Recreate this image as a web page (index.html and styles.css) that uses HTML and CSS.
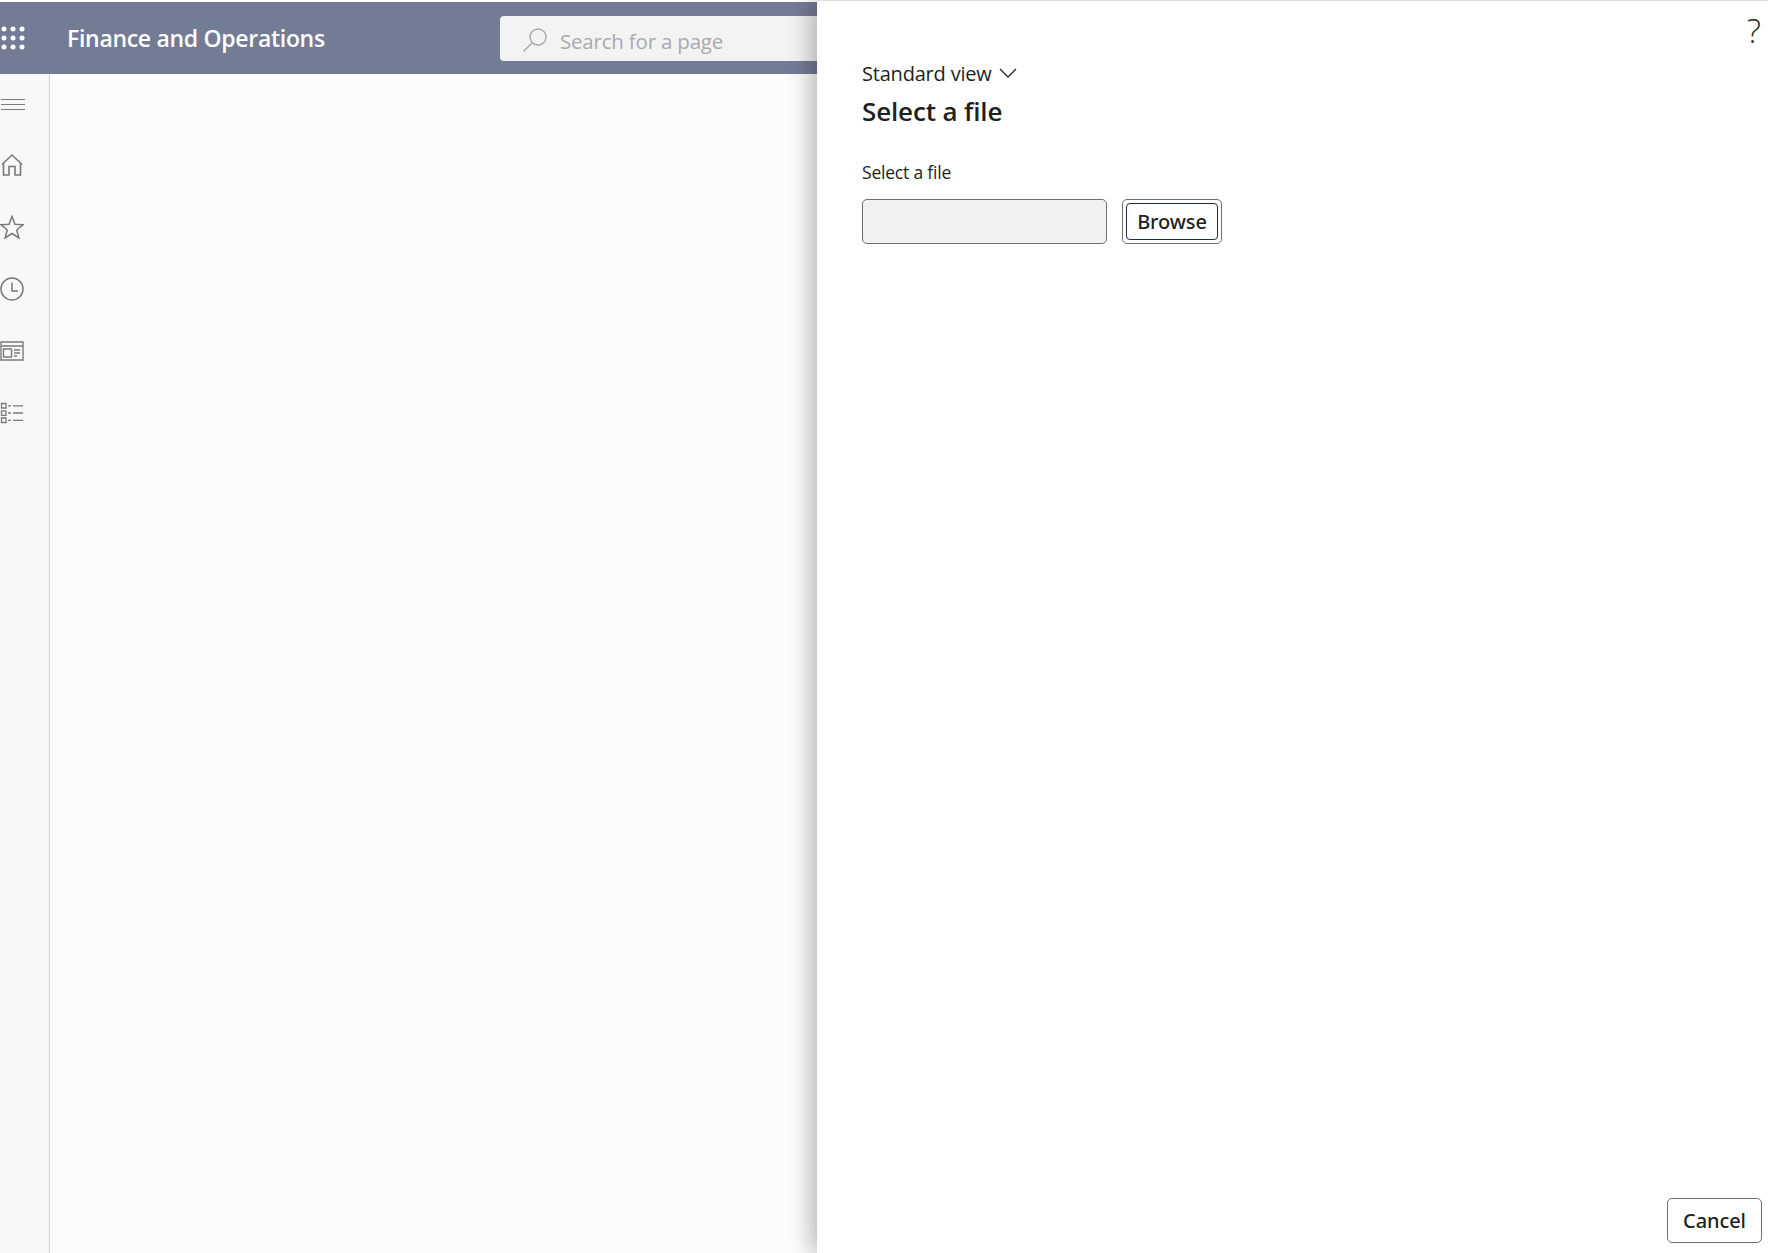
FILE: index.html
```html
<!DOCTYPE html>
<html lang="en">
<head>
<meta charset="utf-8">
<title>Finance and Operations</title>
<link rel="stylesheet" href="styles.css">
</head>
<body>
<div class="shell">
  <header class="topbar">
    <svg class="waffle" width="26" height="26" viewBox="0 0 26 26" fill="#fff"><circle cx="3" cy="4" r="2.5"/><circle cx="12" cy="4" r="2.5"/><circle cx="21" cy="4" r="2.5"/><circle cx="3" cy="13" r="2.5"/><circle cx="12" cy="13" r="2.5"/><circle cx="21" cy="13" r="2.5"/><circle cx="3" cy="22" r="2.5"/><circle cx="12" cy="22" r="2.5"/><circle cx="21" cy="22" r="2.5"/></svg>
    <span class="brand">Finance and Operations</span>
    <div class="search">
      <svg width="26" height="26" viewBox="0 0 26 26" fill="none" stroke="#a8a8a8" stroke-width="1.4"><circle cx="16" cy="10" r="8"/><path d="M10.2 15.8 1.5 24.5"/></svg>
      <span class="search-text">Search for a page</span>
    </div>
  </header>
  <div class="work">
    <nav class="rail">
      <svg class="ico" width="26" height="12" viewBox="0 0 26 12" stroke="#7a7a7a" stroke-width="1" fill="none"><path d="M1 .5h24M1 5.5h24M1 10.5h24"/></svg>
      <svg class="ico" width="24" height="24" viewBox="0 0 24 24" stroke="#7a7a7a" stroke-width="1.6" fill="none"><path d="M2 11.500 12 2l10 9.500M3.500 10v12h5.500v-8.500h6V22h5.500V10"/></svg>
      <svg class="ico" width="24" height="24" viewBox="0 0 24 24" stroke="#7a7a7a" stroke-width="1.5" fill="none"><path d="M12 1.500l3 7.800 8 .5-6.200 5.200 2.100 8L12 18.500 5.100 23l2.100-8L1 9.800l8-.5z"/></svg>
      <svg class="ico" width="24" height="24" viewBox="0 0 24 24" stroke="#7a7a7a" stroke-width="1.500" fill="none"><circle cx="12" cy="12" r="11"/><path d="M12 5.500V14h6"/></svg>
      <svg class="ico" width="24" height="20" viewBox="0 0 24 20" stroke="#7a7a7a" stroke-width="1.400" fill="none"><path d="M1 1h22v18H1zM1 5h22M3.500 8h8v8h-8zM14 9h6M14 12h6M14 15h3"/></svg>
      <svg class="ico" width="24" height="22" viewBox="0 0 24 22" stroke="#7a7a7a" stroke-width="1.300" fill="none"><path d="M1.500 1.500h4.500v4.500H1.500zM1.500 8.800h4.500v4.500H1.500zM1.500 16h4.500v4.500H1.500zM8 3.800h3M13 3.800h10M8 11h3M13 11h10M8 18.300h3M13 18.300h10"/></svg>
    </nav>
    <main class="canvas"></main>
  </div>
</div>
<aside class="panel">
  <div class="help">?</div>
  <div class="view">
    <span>Standard view</span>
    <svg width="18" height="10" viewBox="0 0 18 10" fill="none" stroke="#292827" stroke-width="1.300"><path d="M1 1l8 8 8-8"/></svg>
  </div>
  <h1 class="title">Select a file</h1>
  <label class="label">Select a file</label>
  <div class="upload">
    <div class="field"></div>
    <button class="btn focus" type="button"><span class="inner">Browse</span></button>
  </div>
  <div class="foot">
    <button class="btn cancel" type="button">Cancel</button>
  </div>
</aside>
</body>
</html>
```
FILE: styles.css
```css
* { box-sizing: border-box; }
html, body { height: 100%; }
body {
  margin: 0;
  height: 1253px;
  overflow: hidden;
  display: flex;
  background: #fff;
  font-family: "Open Sans", "Noto Sans", sans-serif;
  color: #201f1e;
}
.shell {
  width: 817px;
  flex: none;
  padding-top: 2px;
  display: flex;
  flex-direction: column;
  overflow: hidden;
}
.topbar {
  height: 72px;
  flex: none;
  background: #747b95;
  display: flex;
  align-items: center;
  padding-left: 1px;
}
.waffle { flex: none; }
.brand {
  margin-left: 40px;
  width: 433px;
  flex: none;
  color: #fff;
  font-size: 23px;
  font-weight: 600;
  letter-spacing: -0.3px;
  white-space: nowrap;
}
.search {
  width: 500px;
  height: 45px;
  flex: none;
  margin-top: 1px;
  background: #f3f3f3;
  border-radius: 4px;
  display: flex;
  align-items: center;
  gap: 12px;
  padding-left: 22px;
  padding-top: 3px;
}
.search-text {
  font-size: 20.500px;
  color: #a9a9ae;
  white-space: nowrap;
  letter-spacing: -0.2px;
  position: relative;
  top: 1px;
}
.work { flex: 1; display: flex; min-height: 0; }
.rail {
  width: 50px;
  flex: none;
  background: #f8f8f8;
  border-right: 1px solid #d2d2d2;
  display: flex;
  flex-direction: column;
  padding-top: 25px;
}
.ico { flex: none; display: block; }
.ico:nth-child(1) { margin-bottom: 42px; }
.ico:nth-child(2) { margin-bottom: 38px; }
.ico:nth-child(3) { margin-bottom: 38px; }
.ico:nth-child(4) { margin-bottom: 40px; }
.ico:nth-child(5) { margin-bottom: 41px; }
.canvas { flex: 1; background: #fcfcfc; }
.panel {
  flex: 1;
  min-width: 0;
  position: relative;
  z-index: 1;
  background: #fff;
  border-top: 1px solid #e0e0e0;
  box-shadow: -6px 0 22px rgba(0, 0, 0, 0.28);
  padding: 58px 6px 10px 45px;
  display: flex;
  flex-direction: column;
}
.help {
  position: absolute;
  top: 7px;
  right: 7px;
  font-size: 33px;
  font-weight: 300;
  line-height: 45px;
  color: #292827;
}
.view {
  display: flex;
  align-items: center;
  gap: 7px;
  height: 28px;
  font-size: 20px;
  letter-spacing: -0.2px;
}
.title {
  margin: 5px 0 0;
  font-size: 26px;
  line-height: 38px;
  font-weight: 600;
  letter-spacing: -0.15px;
}
.label {
  display: block;
  margin-top: 30px;
  font-size: 17.500px;
  line-height: 24px;
  letter-spacing: -0.2px;
}
.upload {
  display: flex;
  gap: 15px;
  margin-top: 15px;
}
.field {
  width: 245px;
  height: 45px;
  background: #f2f1f0;
  border: 1px solid #6e6e6e;
  border-radius: 5px;
}
.btn {
  height: 45px;
  background: #fff;
  border: 1px solid #6e6e6e;
  border-radius: 5px;
  font: 500 20px "Noto Sans", "Open Sans", sans-serif;
  letter-spacing: -0.1px;
  color: #201f1e;
  padding: 0;
}
.focus {
  width: 100px;
  padding: 3px;
}
.inner {
  display: flex;
  height: 100%;
  align-items: center;
  justify-content: center;
  border: 1px solid #1e2a4a;
  border-radius: 4px;
}
.foot {
  margin-top: auto;
  display: flex;
  justify-content: flex-end;
}
.cancel { width: 95px; }
```
